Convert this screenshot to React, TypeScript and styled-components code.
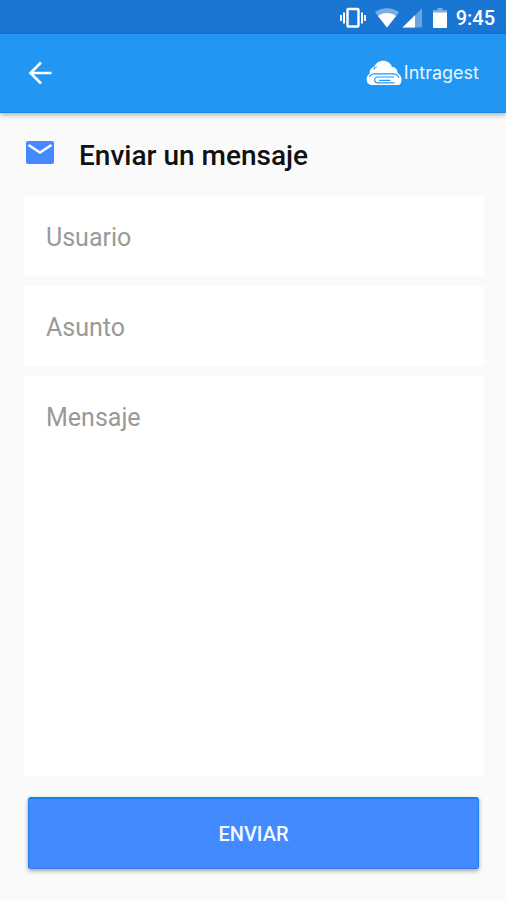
import React from "react";
import styled, { createGlobalStyle, css } from "styled-components";

const GlobalStyle = createGlobalStyle`
  *, *::before, *::after { box-sizing: border-box; }
  html, body { margin: 0; background: #fafafa; }
  body { font-family: Roboto, "Liberation Sans", sans-serif; color: #111; }
`;

const Screen = styled.div`
  display: flex;
  flex-direction: column;
  min-height: 100vh;
  background: #fafafa;
`;

const StatusBar = styled.div`
  display: flex;
  align-items: center;
  justify-content: flex-end;
  height: 34px;
  padding: 2px 11px 0 0;
  background: #1976d2;
  color: #fff;
`;

const StatusIcon = styled.svg<{ $gap: number }>`
  display: block;
  flex: none;
  margin-right: ${({ $gap }) => $gap}px;
`;

const Clock = styled.time`
  font-size: 20px;
  line-height: 24px;
  font-weight: 500;
`;

const AppBar = styled.header`
  display: flex;
  align-items: center;
  justify-content: space-between;
  height: 79px;
  padding: 0 27px 0 20px;
  background: #2196f3;
  border-bottom: 1px solid #1b87e0;
  box-shadow: 0 2px 5px rgba(0, 0, 0, 0.3);
  color: #fff;
`;

const BackButton = styled.button`
  display: grid;
  place-items: center;
  width: 40px;
  height: 40px;
  padding: 0;
  border: 0;
  background: transparent;
  color: inherit;
  cursor: pointer;
`;

const Brand = styled.div`
  display: flex;
  align-items: center;
  gap: 2px;
`;

const BrandName = styled.span`
  font-family: Inter, sans-serif;
  font-size: 18px;
  line-height: 24px;
  font-weight: 400;
  color: #e9f5ff;
`;

const Content = styled.main`
  display: flex;
  flex: 1;
  flex-direction: column;
  padding: 24px 22px 31px 24px;
`;

const Heading = styled.div`
  display: flex;
  align-items: center;
  gap: 24px;
  height: 38px;
`;

const MailIcon = styled.svg`
  display: block;
  flex: none;
  margin: 0 0 7px 1px;
`;

const Title = styled.h1`
  margin: 0;
  font-size: 28px;
  line-height: 32px;
  font-weight: 500;
`;

const Form = styled.form`
  display: flex;
  flex: 1;
  flex-direction: column;
  gap: 10px;
  margin-top: 21px;
`;

const fieldStyle = css`
  display: block;
  width: 100%;
  border: 0;
  border-radius: 0;
  outline-color: #448aff;
  background: #fff;
  color: #111;
  font-family: inherit;
  font-size: 25px;
  line-height: 32px;

  &::placeholder {
    color: #999;
    opacity: 1;
  }
`;

const TextField = styled.input`
  ${fieldStyle}
  height: 80px;
  padding: 2px 22px 0;
`;

const MessageField = styled.textarea`
  ${fieldStyle}
  flex: 1;
  min-height: 200px;
  padding: 26px 22px;
  resize: none;
`;

const SendButton = styled.button`
  height: 72px;
  margin: 11px 5px 0 4px;
  border: 1px solid #1a80ec;
  border-top-width: 2px;
  border-bottom-color: #3479ee;
  border-radius: 3px;
  background: #448aff;
  box-shadow: 0 2px 4px rgba(0, 0, 0, 0.35);
  color: #f4f8ff;
  font-family: inherit;
  font-size: 20px;
  line-height: 24px;
  font-weight: 500;
  cursor: pointer;
`;

function VibrateIcon() {
  return (
    <StatusIcon $gap={9} width="26" height="22" viewBox="0 0 26 22" fill="none" stroke="#fff" aria-hidden="true">
      <rect x="7.5" y="2" width="11" height="17.5" rx="1" strokeWidth="2.4" />
      <path d="M4 5.5v11M22 5.5v11" strokeWidth="2" />
      <path d="M1 8v6M25 8v6" strokeWidth="1.8" />
    </StatusIcon>
  );
}

function WifiIcon() {
  return (
    <StatusIcon $gap={3} width="24" height="20" viewBox="0 0 24 20" fill="#fff" aria-hidden="true">
      <path opacity="0.42" d="M12 19.5 0 4.2C3.4 1.7 7.5 .3 12 .3s8.6 1.4 12 3.9z" />
      <path d="M12 19.5 2.9 7.9C5.5 6 8.6 5 12 5s6.5 1 9.1 2.9z" />
    </StatusIcon>
  );
}

function SignalIcon() {
  return (
    <StatusIcon $gap={11} width="20" height="20" viewBox="0 0 20 20" fill="#fff" aria-hidden="true">
      <path opacity="0.35" d="M20 .5V19.5H.5z" />
      <path d="M13 7.3V19.5H.5z" />
    </StatusIcon>
  );
}

function BatteryIcon() {
  return (
    <StatusIcon $gap={9} width="14" height="22" viewBox="0 0 14 22" fill="#fff" aria-hidden="true">
      <path opacity="0.4" d="M4.5 1h5v2H14v3H0V3h4.5z" />
      <path d="M0 5.5h14V20a1 1 0 0 1-1 1H1a1 1 0 0 1-1-1z" />
    </StatusIcon>
  );
}

function CloudLogo() {
  return (
    <svg width="36" height="26" viewBox="0 0 36 26" aria-hidden="true">
      <path
        fill="#fff"
        d="M5 25C2.5 24.5 .6 22.500 .6 19.500c0-2.500 1-4.500 3-5.700C3.400 10.500 5 7.700 8.300 6.600 9.800 3 13 .8 17 .8c4.300 0 7.600 2.300 8.900 5.900 3.700 .3 5.800 3 5.600 6.300 2.500 1.500 4 3.700 4 6.700 0 3-1.200 5.300-3.500 5.300z"
      />
      <path
        fill="none"
        stroke="#2196f3"
        strokeWidth="1.2"
        strokeLinecap="round"
        strokeLinejoin="round"
        d="M3.500 16.300C4.800 14.600 6.500 13.800 8.500 13.800H27c3 0 4.800 1.400 5.800 3.600M24 20.300H13.500M27.500 17H12c-4.500 0-4.500 5.800 0 5.800h16M8 9.200c.3-1.300 1-2 2.300-2.200"
      />
    </svg>
  );
}

export default function App() {
  return (
    <>
      <GlobalStyle />
      <Screen>
        <StatusBar>
          <VibrateIcon />
          <WifiIcon />
          <SignalIcon />
          <BatteryIcon />
          <Clock>9:45</Clock>
        </StatusBar>
        <AppBar>
          <BackButton type="button" aria-label="Volver">
            <svg width="24" height="24" viewBox="0 0 24 24" fill="none" stroke="currentColor" strokeWidth="2.6" aria-hidden="true">
              <path d="M23.5 12H3M13 1.5 2.5 12 13 22.5" />
            </svg>
          </BackButton>
          <Brand>
            <CloudLogo />
            <BrandName>Intragest</BrandName>
          </Brand>
        </AppBar>
        <Content>
          <Heading>
            <MailIcon width="30" height="23" viewBox="0 0 30 23" aria-hidden="true">
              <rect x="1" width="28" height="23" rx="2" fill="#448aff" />
              <path d="M3.5 4 15 11.5 26.5 4" fill="none" stroke="#fafafa" strokeWidth="2.6" />
            </MailIcon>
            <Title>Enviar un mensaje</Title>
          </Heading>
          <Form onSubmit={(event: React.FormEvent) => event.preventDefault()}>
            <TextField type="text" name="usuario" aria-label="Usuario" placeholder="Usuario" />
            <TextField type="text" name="asunto" aria-label="Asunto" placeholder="Asunto" />
            <MessageField name="mensaje" aria-label="Mensaje" placeholder="Mensaje" />
            <SendButton type="submit">ENVIAR</SendButton>
          </Form>
        </Content>
      </Screen>
    </>
  );
}
